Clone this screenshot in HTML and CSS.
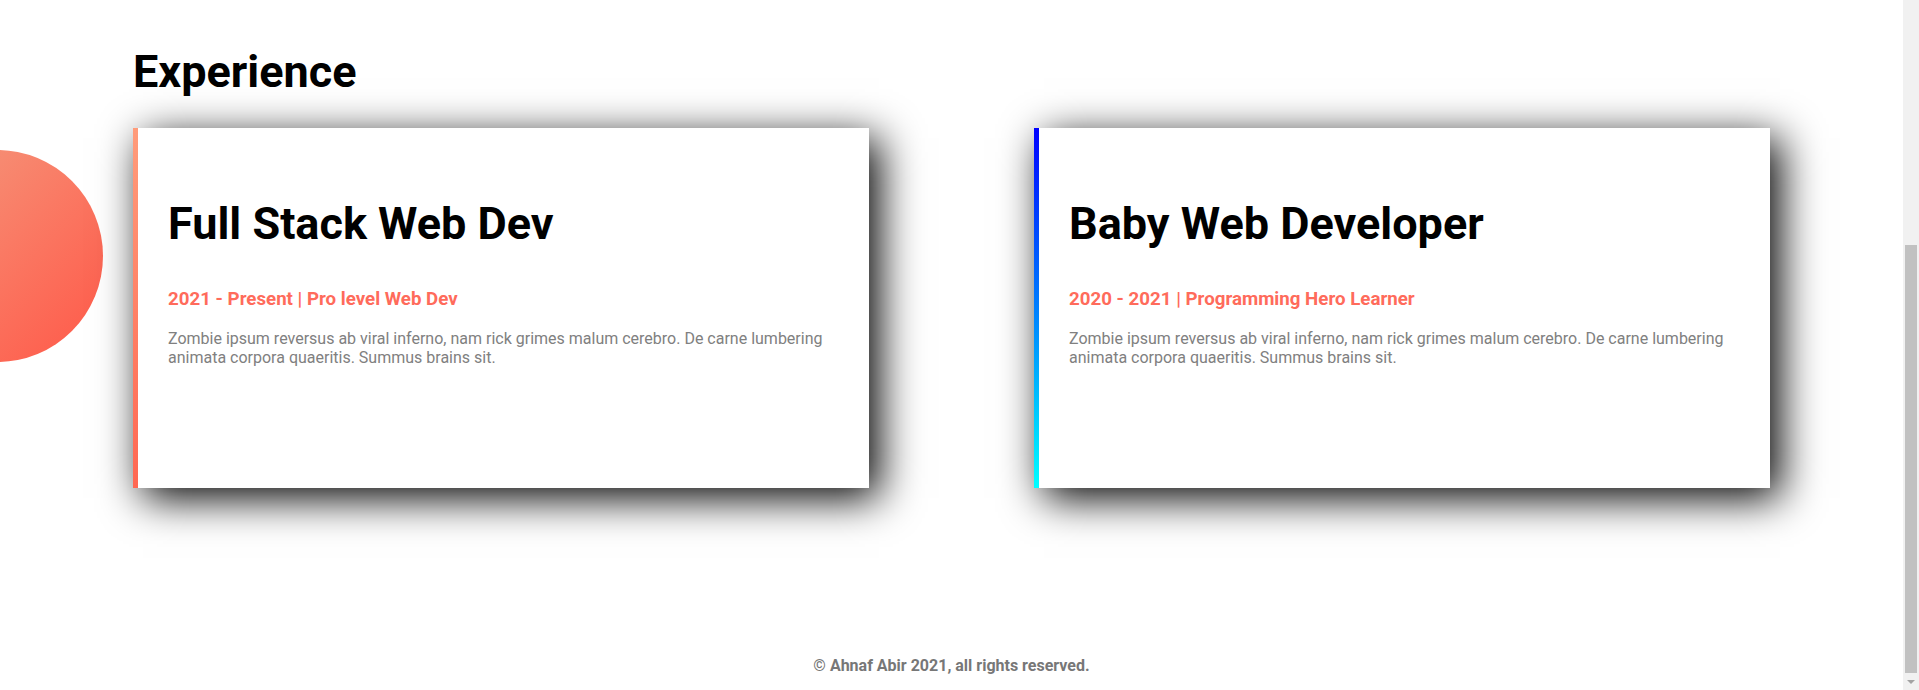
FILE: index.html
```html
<!DOCTYPE html>
<html lang="en">
<head>
<meta charset="utf-8">
<title>Experience</title>
<link rel="stylesheet" href="styles.css">
</head>
<body>
<div class="page">
  <main class="main">
    <div class="blob"></div>
    <section class="experience">
      <h2 class="section-title">Experience</h2>
      <div class="cards">
        <article class="card card-warm">
          <h1 class="card-title">Full Stack Web Dev</h1>
          <h3 class="card-meta">2021 - Present | Pro level Web Dev</h3>
          <p class="card-text">Zombie ipsum reversus ab viral inferno, nam rick grimes malum cerebro. De carne lumbering animata corpora quaeritis. Summus brains sit.</p>
        </article>
        <article class="card card-cool">
          <h1 class="card-title">Baby Web Developer</h1>
          <h3 class="card-meta">2020 - 2021 | Programming Hero Learner</h3>
          <p class="card-text">Zombie ipsum reversus ab viral inferno, nam rick grimes malum cerebro. De carne lumbering animata corpora quaeritis. Summus brains sit.</p>
        </article>
      </div>
    </section>
    <footer class="footer">© Ahnaf Abir 2021, all rights reserved.</footer>
  </main>
  <div class="scrollbar">
    <div class="scroll-thumb"></div>
    <div class="scroll-btn"><span class="arrow-down"></span></div>
  </div>
</div>
</body>
</html>
```

FILE: styles.css
```css
* { box-sizing: border-box; }

html, body {
  margin: 0;
  padding: 0;
  background: #fff;
  font-family: Roboto, "Liberation Sans", sans-serif;
}

.page {
  display: flex;
  height: 690px;
  overflow: hidden;
}

.main {
  position: relative;
  flex: 1;
  display: flex;
  flex-direction: column;
}

.blob {
  position: absolute;
  left: -109px;
  top: 150px;
  width: 212px;
  height: 212px;
  border-radius: 50%;
  background: linear-gradient(135deg, #f39d80 0%, #fa7a64 50%, #ff5848 100%);
  z-index: 0;
}

.experience {
  position: relative;
  z-index: 1;
  padding: 45px 133px 0;
}

.section-title {
  margin: 0;
  font-size: 45px;
  font-weight: 700;
  line-height: 53px;
  color: #000;
}

.cards {
  display: flex;
  justify-content: space-between;
  margin-top: 30px;
}

.card {
  width: 736px;
  height: 360px;
  background: #fff;
  border-left: 5px solid;
  padding: 69px 29px 0 30px;
  box-shadow: 10px 10px 40px #000;
}

.card-warm {
  border-image: linear-gradient(to bottom, #ff9c7b, #ff6752) 1;
}

.card-cool {
  border-image: linear-gradient(to bottom, #0000ff, #00ffff) 1;
}

.card-title {
  margin: 0;
  font-size: 45px;
  font-weight: 700;
  line-height: 53px;
  color: #000;
}

.card-meta {
  margin: 38px 0 0;
  font-size: 18.72px;
  font-weight: 700;
  line-height: normal;
  color: #ff6b5b;
}

.card-text {
  margin: 19px 0 0;
  padding-left: 0;
  font-size: 16px;
  line-height: normal;
  color: #808080;
}

.footer {
  margin-top: auto;
  padding-bottom: 15px;
  text-align: center;
  font-size: 16px;
  font-weight: 700;
  color: #777;
  line-height: normal;
}

.scrollbar {
  width: 16px;
  flex: none;
  background: #f1f1f1;
  display: flex;
  flex-direction: column;
  align-items: center;
}

.scroll-thumb {
  margin-top: 245px;
  width: 12px;
  height: 428px;
  background: #c1c1c1;
}

.scroll-btn {
  flex: 1;
  display: flex;
  align-items: center;
  justify-content: center;
}

.arrow-down {
  width: 0;
  height: 0;
  border-left: 4px solid transparent;
  border-right: 4px solid transparent;
  border-top: 4px solid #a3a3a3;
}
```
